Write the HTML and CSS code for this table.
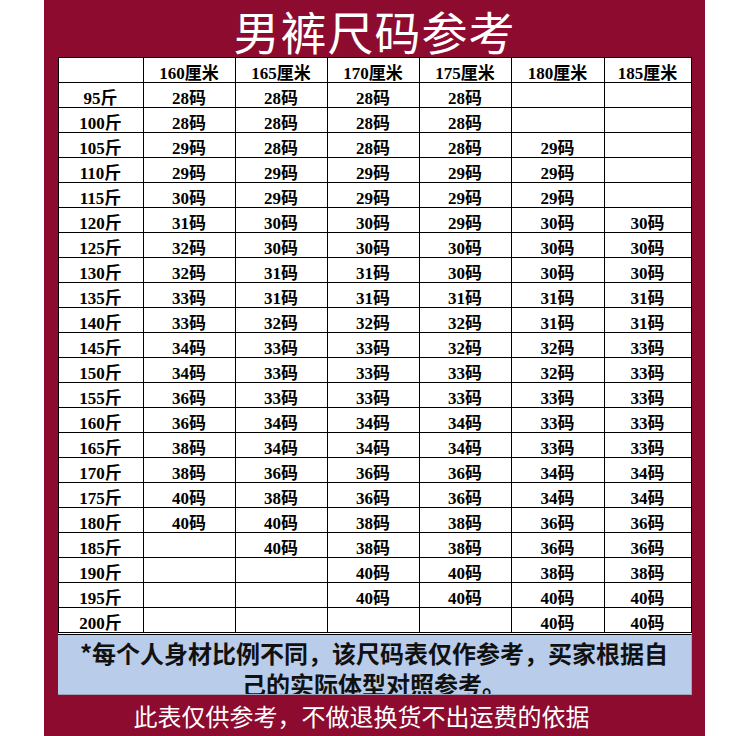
FILE: index.html
```html
<!DOCTYPE html>
<html lang="zh-CN">
<head>
<meta charset="utf-8">
<title>男裤尺码参考</title>
<link rel="stylesheet" href="styles.css">
</head>
<body>
<div class="panel">
  <h1 class="title">男裤尺码参考</h1>
  <div class="sheet">
    <table class="chart">
      <colgroup>
        <col class="c1"><col class="c2"><col class="c2"><col class="c2"><col class="c2"><col class="c6"><col class="c7">
      </colgroup>
      <thead>
        <tr><th></th><th>160厘米</th><th>165厘米</th><th>170厘米</th><th>175厘米</th><th>180厘米</th><th>185厘米</th></tr>
      </thead>
      <tbody>
        <tr><td>95斤</td><td>28码</td><td>28码</td><td>28码</td><td>28码</td><td></td><td></td></tr>
        <tr><td>100斤</td><td>28码</td><td>28码</td><td>28码</td><td>28码</td><td></td><td></td></tr>
        <tr><td>105斤</td><td>29码</td><td>28码</td><td>28码</td><td>28码</td><td>29码</td><td></td></tr>
        <tr><td>110斤</td><td>29码</td><td>29码</td><td>29码</td><td>29码</td><td>29码</td><td></td></tr>
        <tr><td>115斤</td><td>30码</td><td>29码</td><td>29码</td><td>29码</td><td>29码</td><td></td></tr>
        <tr><td>120斤</td><td>31码</td><td>30码</td><td>30码</td><td>29码</td><td>30码</td><td>30码</td></tr>
        <tr><td>125斤</td><td>32码</td><td>30码</td><td>30码</td><td>30码</td><td>30码</td><td>30码</td></tr>
        <tr><td>130斤</td><td>32码</td><td>31码</td><td>31码</td><td>30码</td><td>30码</td><td>30码</td></tr>
        <tr><td>135斤</td><td>33码</td><td>31码</td><td>31码</td><td>31码</td><td>31码</td><td>31码</td></tr>
        <tr><td>140斤</td><td>33码</td><td>32码</td><td>32码</td><td>32码</td><td>31码</td><td>31码</td></tr>
        <tr><td>145斤</td><td>34码</td><td>33码</td><td>33码</td><td>32码</td><td>32码</td><td>33码</td></tr>
        <tr><td>150斤</td><td>34码</td><td>33码</td><td>33码</td><td>33码</td><td>32码</td><td>33码</td></tr>
        <tr><td>155斤</td><td>36码</td><td>33码</td><td>33码</td><td>33码</td><td>33码</td><td>33码</td></tr>
        <tr><td>160斤</td><td>36码</td><td>34码</td><td>34码</td><td>34码</td><td>33码</td><td>33码</td></tr>
        <tr><td>165斤</td><td>38码</td><td>34码</td><td>34码</td><td>34码</td><td>33码</td><td>33码</td></tr>
        <tr><td>170斤</td><td>38码</td><td>36码</td><td>36码</td><td>36码</td><td>34码</td><td>34码</td></tr>
        <tr><td>175斤</td><td>40码</td><td>38码</td><td>36码</td><td>36码</td><td>34码</td><td>34码</td></tr>
        <tr><td>180斤</td><td>40码</td><td>40码</td><td>38码</td><td>38码</td><td>36码</td><td>36码</td></tr>
        <tr><td>185斤</td><td></td><td>40码</td><td>38码</td><td>38码</td><td>36码</td><td>36码</td></tr>
        <tr><td>190斤</td><td></td><td></td><td>40码</td><td>40码</td><td>38码</td><td>38码</td></tr>
        <tr><td>195斤</td><td></td><td></td><td>40码</td><td>40码</td><td>40码</td><td>40码</td></tr>
        <tr><td>200斤</td><td></td><td></td><td></td><td></td><td>40码</td><td>40码</td></tr>
      </tbody>
    </table>
    <p class="note">*每个人身材比例不同，该尺码表仅作参考，买家根据自<br>己的实际体型对照参考。</p>
  </div>
  <p class="footer">此表仅供参考，不做退换货不出运费的依据</p>
</div>
</body>
</html>
```

FILE: styles.css
```css
html, body {
  margin: 0;
  padding: 0;
  background: #ffffff;
}

.panel {
  width: 661px;
  height: 736px;
  margin-left: 44px;
  background: #8c0b2f;
  display: flex;
  flex-direction: column;
  align-items: center;
  overflow: hidden;
}

.title {
  margin: 0;
  height: 54px;
  padding-top: 3px;
  line-height: 54px;
  font-family: "Noto Sans CJK SC", sans-serif;
  font-weight: 400;
  font-size: 46px;
  letter-spacing: 1px;
  color: #ffffff;
  text-align: center;
}

.sheet {
  width: 634px;
  background: #ffffff;
}

.chart {
  width: 634px;
  table-layout: fixed;
  border-collapse: separate;
  border-spacing: 1px;
  background: #000000;
}

.c1 { width: 84px; }
.c2 { width: 91px; }
.c6 { width: 92px; }
.c7 { width: 86px; }

.chart th,
.chart td {
  box-sizing: border-box;
  height: 24px;
  padding: 7px 0 0 0;
  background: #ffffff;
  font-family: "Liberation Serif", "Noto Sans CJK SC", serif;
  font-weight: 700;
  font-size: 17px;
  line-height: 17px;
  color: #000000;
  text-align: center;
  vertical-align: top;
  white-space: nowrap;
}

.note {
  box-sizing: border-box;
  margin: 1px 0 0 0;
  height: 61px;
  padding: 2px 0 0 0;
  border-top: 1px solid #000000;
  border-right: 1px solid #9aa6b8;
  border-bottom: 1px solid #9aa6b8;
  background: #b9cce9;
  font-family: "Noto Sans CJK SC", sans-serif;
  font-weight: 700;
  font-size: 24px;
  line-height: 31px;
  color: #111111;
  text-align: center;
  overflow: hidden;
}

.footer {
  margin: 0;
  flex: 1;
  display: flex;
  align-items: center;
  justify-content: center;
  font-family: "Noto Sans CJK SC", sans-serif;
  font-weight: 400;
  font-size: 24px;
  color: #ffffff;
  padding-right: 26px;
}
```
